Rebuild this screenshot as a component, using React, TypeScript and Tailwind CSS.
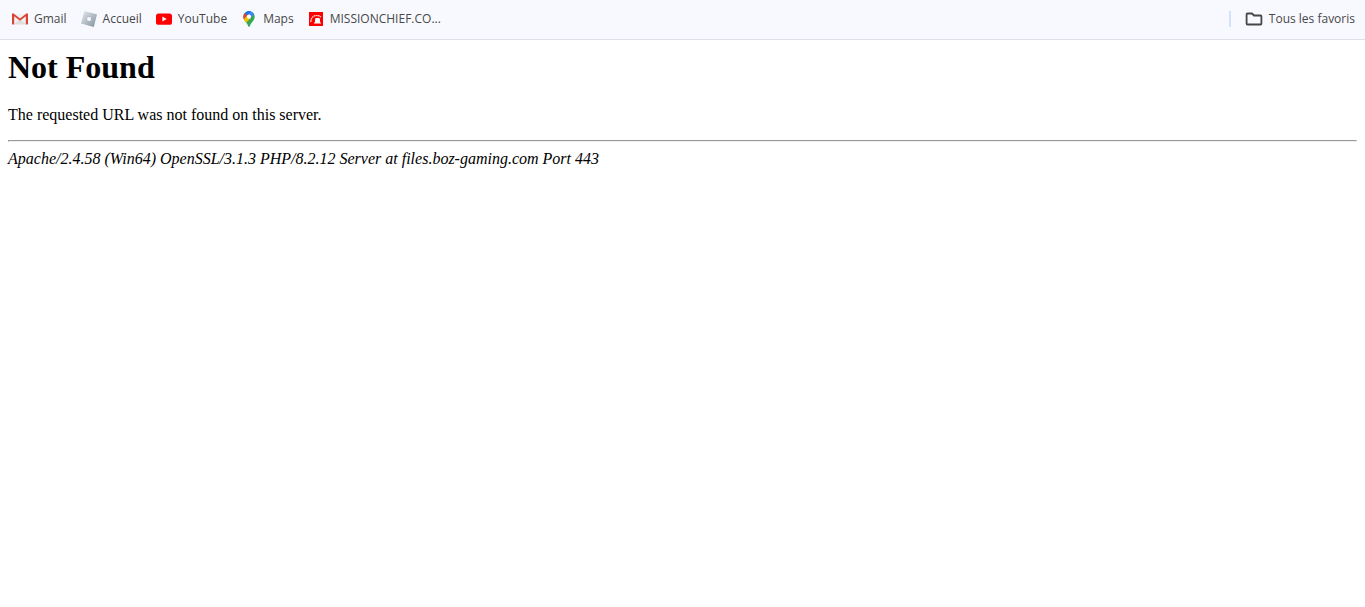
import type { ReactNode } from 'react'

interface Bookmark {
  label: string
  href: string
  icon: ReactNode
}

function GmailIcon() {
  return (
    <svg viewBox="0 0 16 16" className="size-4 shrink-0" aria-hidden="true">
      <path d="M2 3h12v10.5H2z" fill="#f0f0f0" />
      <path d="M2 13.5 8 8l6 5.5z" fill="#dfdfdf" />
      <path d="M0 3.6C0 2.6.8 2.2 1.6 2.4L8 7.4l6.4-5c.8-.2 1.6.2 1.6 1.2v8.9c0 .6-.4 1-1 1h-1.2V5.2L8 9.8 2.2 5.2v8.3H1c-.6 0-1-.4-1-1z" fill="#dc4437" />
    </svg>
  )
}

function RobloxIcon() {
  return (
    <svg viewBox="0 0 16 16" className="size-4 shrink-0" aria-hidden="true">
      <defs>
        <linearGradient id="tile" x1="0" y1="0" x2="1" y2="1">
          <stop offset="0" stopColor="#e3e7ea" />
          <stop offset=".45" stopColor="#b9c3cb" />
          <stop offset="1" stopColor="#7f8e9a" />
        </linearGradient>
      </defs>
      <path d="M3.4.2 16 3.3l-3.2 12.6L0 12.6z" fill="url(#tile)" />
      <path d="m6.4 5.2 4.5 1.2-1.2 4.5-4.5-1.2z" fill="#a3afb9" />
      <path d="m6.7 5.8 3.5.9-.9 3.5-3.5-.9z" fill="#f8faff" />
    </svg>
  )
}

function YouTubeIcon() {
  return (
    <svg viewBox="0 0 16 16" className="size-4 shrink-0" aria-hidden="true">
      <rect y="2.4" width="16" height="11.4" rx="2.6" fill="#f00" />
      <path d="m6.4 5.6 4.3 2.5-4.3 2.5z" fill="#fff" />
    </svg>
  )
}

function MapsIcon() {
  return (
    <svg viewBox="0 0 16 16" className="size-4 shrink-0" aria-hidden="true">
      <defs>
        <clipPath id="pin">
          <path d="M8 0a5.7 5.7 0 0 0-5.7 5.7c0 2 .9 3.3 2.2 5 1.3 1.6 2.2 2.7 2.7 4.3.2.7.4 1 .8 1s.6-.3.8-1c.5-1.6 1.4-2.7 2.7-4.3 1.3-1.7 2.2-3 2.2-5A5.7 5.7 0 0 0 8 0z" />
        </clipPath>
      </defs>
      <g clipPath="url(#pin)">
        <path d="M0 0h16v16H0z" fill="#34a853" />
        <path d="M5.9 0H16v3.1h-2.6L9.7 7.3 6.3 4.3z" fill="#4285f4" />
        <path d="M0 0h2l4.4 4.1-3.6 4.4H0z" fill="#ea4335" />
        <path d="m6.3 4.3-4 4.7 2.5 3 5-5z" fill="#fbbc04" />
        <path d="M3.6 2 6.4 4.3 9.7.3 7 0z" fill="#1a73e8" />
      </g>
      <circle cx="8" cy="5.7" r="2.1" fill="#fff" />
    </svg>
  )
}

function SirenIcon() {
  return (
    <svg viewBox="0 0 16 16" className="size-4 shrink-0" aria-hidden="true">
      <path d="M1 1h14v14H1z" fill="#f00" />
      <path d="M7 12V8.5C7 7.4 7.8 7 9.500 7s2.500.4 2.500 1.500V12z" fill="#fff" />
      <path d="M6 12h7" stroke="#fff" strokeWidth="1" />
      <path d="M2.800 11C3 7 5 4.500 8.800 4.500c1.800 0 3.200.6 4.200 1.700" fill="none" stroke="#fff" strokeOpacity=".85" strokeWidth="1.200" strokeDasharray="1.800 .4" />
    </svg>
  )
}

function FolderIcon() {
  return (
    <svg viewBox="0 0 18 16" className="h-4 w-[18px] shrink-0" fill="none" stroke="#474747" strokeWidth="1.8" strokeLinejoin="round" aria-hidden="true">
      <path d="M2.400 2.500h4.600l2 2h6.600q.8 0 .8.800v7.400q0 .8-.8.800H2.400q-.8 0-.8-.8V3.300q0-.8.800-.8z" />
    </svg>
  )
}

const bookmarks: Bookmark[] = [
  { label: 'Gmail', href: '#gmail', icon: <GmailIcon /> },
  { label: 'Accueil', href: '#accueil', icon: <RobloxIcon /> },
  { label: 'YouTube', href: '#youtube', icon: <YouTubeIcon /> },
  { label: 'Maps', href: '#maps', icon: <MapsIcon /> },
  { label: 'MISSIONCHIEF.CO...', href: '#missionchief', icon: <SirenIcon /> },
]

function BookmarksBar() {
  return (
    <nav
      aria-label="Favoris"
      className="flex h-10 items-center justify-between border-b border-[#dfe1e8] bg-[#f8f9ff] pr-2.5 pb-0.5 pl-3 font-['Open_Sans','Noto_Sans',sans-serif] text-[12px] leading-4 text-[#474747]"
    >
      <div className="flex items-center gap-3.5">
        {bookmarks.map((bookmark) => (
          <a key={bookmark.href} href={bookmark.href} className="flex items-center gap-1.5 whitespace-nowrap">
            {bookmark.icon}
            {bookmark.label}
          </a>
        ))}
      </div>
      <div className="flex items-center gap-3.5">
        <span className="h-4 w-0.5 bg-[#d3e3fd]" />
        <button type="button" className="flex items-center gap-1.5 whitespace-nowrap">
          <FolderIcon />
          Tous les favoris
        </button>
      </div>
    </nav>
  )
}

export default function App() {
  return (
    <div className="min-h-screen bg-white">
      <BookmarksBar />
      <main className="p-2 font-['Liberation_Serif',serif] text-[16px] leading-[18px] text-black">
        <h1 className="text-[32px] leading-[38px] font-bold">Not Found</h1>
        <p className="mt-5 mb-4">The requested URL was not found on this server.</p>
        <hr className="mb-2 h-0.5 border border-[#9a9a9a] border-r-[#eeeeee] border-b-[#eeeeee]" />
        <address className="italic">Apache/2.4.58 (Win64) OpenSSL/3.1.3 PHP/8.2.12 Server at files.boz-gaming.com Port 443</address>
      </main>
    </div>
  )
}
